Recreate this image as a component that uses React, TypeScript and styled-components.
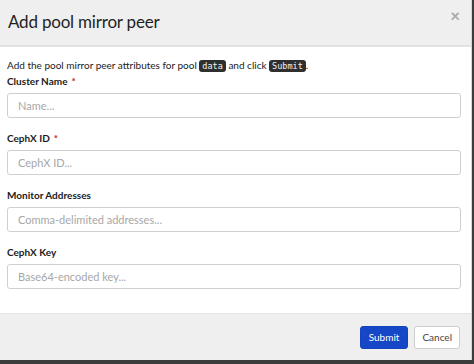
import React from "react";
import styled, { createGlobalStyle } from "styled-components";

const Global = createGlobalStyle`
  html, body { margin: 0; padding: 0; background: #dcdcdc; }
  body { font-family: Lato, "Liberation Sans", sans-serif; }
`;

const Page = styled.div`
  width: 474px;
  height: 364px;
  display: flex;
  flex-direction: column;
  background: #3c3c3c;
  overflow: hidden;
`;

const Modal = styled.div`
  width: 472px;
  height: 360px;
  display: flex;
  flex-direction: column;
  background: #fff;
  border-right: 1px solid #d6d6d6;
  box-sizing: border-box;
`;

const Header = styled.div`
  height: 47px;
  box-sizing: border-box;
  background: #efefef;
  border-bottom: 2px solid #e2e2e2;
  display: flex;
  align-items: center;
  justify-content: space-between;
  padding: 0 11px 3px 8px;
`;

const Title = styled.h1`
  margin: 0;
  font-size: 17px;
  font-weight: 400;
  color: #1f1f1f;
  letter-spacing: -0.2px;
`;

const Close = styled.span`
  font-size: 17px;
  color: #a9a9a9;
  font-weight: 700;
  line-height: 1;
  margin-top: -12px;
`;

const Body = styled.div`
  flex: 1;
  padding: 10px 10px 0 7px;
  display: flex;
  flex-direction: column;
`;

const Intro = styled.p`
  margin: 0;
  font-size: 10px;
  color: #222;
  line-height: 16px;
`;

const Code = styled.code`
  font-family: "DejaVu Sans Mono", monospace;
  font-size: 8.5px;
  background: #2f2f2f;
  color: #f2f2f2;
  border-radius: 3px;
  padding: 1px 3px;
`;

const Field = styled.div`
  display: flex;
  flex-direction: column;
  margin-bottom: 13px;
`;

const Label = styled.label`
  font-size: 10px;
  font-weight: 700;
  color: #1b1b1b;
  line-height: 14px;
  margin-bottom: 5px;
`;

const Req = styled.span`
  color: #c9190b;
  margin-left: 4px;
`;

const Input = styled.input`
  width: 454px;
  height: 25px;
  box-sizing: border-box;
  border: 1px solid #cfcfcf;
  border-radius: 3px;
  padding: 0 10px;
  font-family: Lato, "Liberation Sans", sans-serif;
  font-size: 11px;
  color: #333;
  &::placeholder { color: #a7a7a7; }
`;

const Footer = styled.div`
  height: 47px;
  box-sizing: border-box;
  background: #efefef;
  border-top: 1px solid #e4e4e4;
  display: flex;
  justify-content: flex-end;
  align-items: center;
  gap: 6px;
  padding: 0 11px 0 0;
`;

const Button = styled.button<{ $primary?: boolean }>`
  height: 23px;
  padding: 0 ${(p) => (p.$primary ? "8px" : "7px")};
  border-radius: 3px;
  font-family: Lato, "Liberation Sans", sans-serif;
  font-size: 10px;
  border: 1px solid ${(p) => (p.$primary ? "#1443bf" : "#cdcdcd")};
  background: ${(p) => (p.$primary ? "#1647c6" : "#fff")};
  color: ${(p) => (p.$primary ? "#fff" : "#444")};
`;

export default function App() {
  return (
    <Page>
      <Global />
      <Modal>
        <Header>
          <Title>Add pool mirror peer</Title>
          <Close>×</Close>
        </Header>
        <Body>
          <Intro>
            Add the pool mirror peer attributes for pool <Code>data</Code> and click <Code>Submit</Code>.
          </Intro>
          <Field>
            <Label>
              Cluster Name<Req>*</Req>
            </Label>
            <Input placeholder="Name..." />
          </Field>
          <Field>
            <Label>
              CephX ID<Req>*</Req>
            </Label>
            <Input placeholder="CephX ID..." />
          </Field>
          <Field>
            <Label>Monitor Addresses</Label>
            <Input placeholder="Comma-delimited addresses..." />
          </Field>
          <Field>
            <Label>CephX Key</Label>
            <Input placeholder="Base64-encoded key..." />
          </Field>
        </Body>
        <Footer>
          <Button $primary>Submit</Button>
          <Button>Cancel</Button>
        </Footer>
      </Modal>
    </Page>
  );
}
